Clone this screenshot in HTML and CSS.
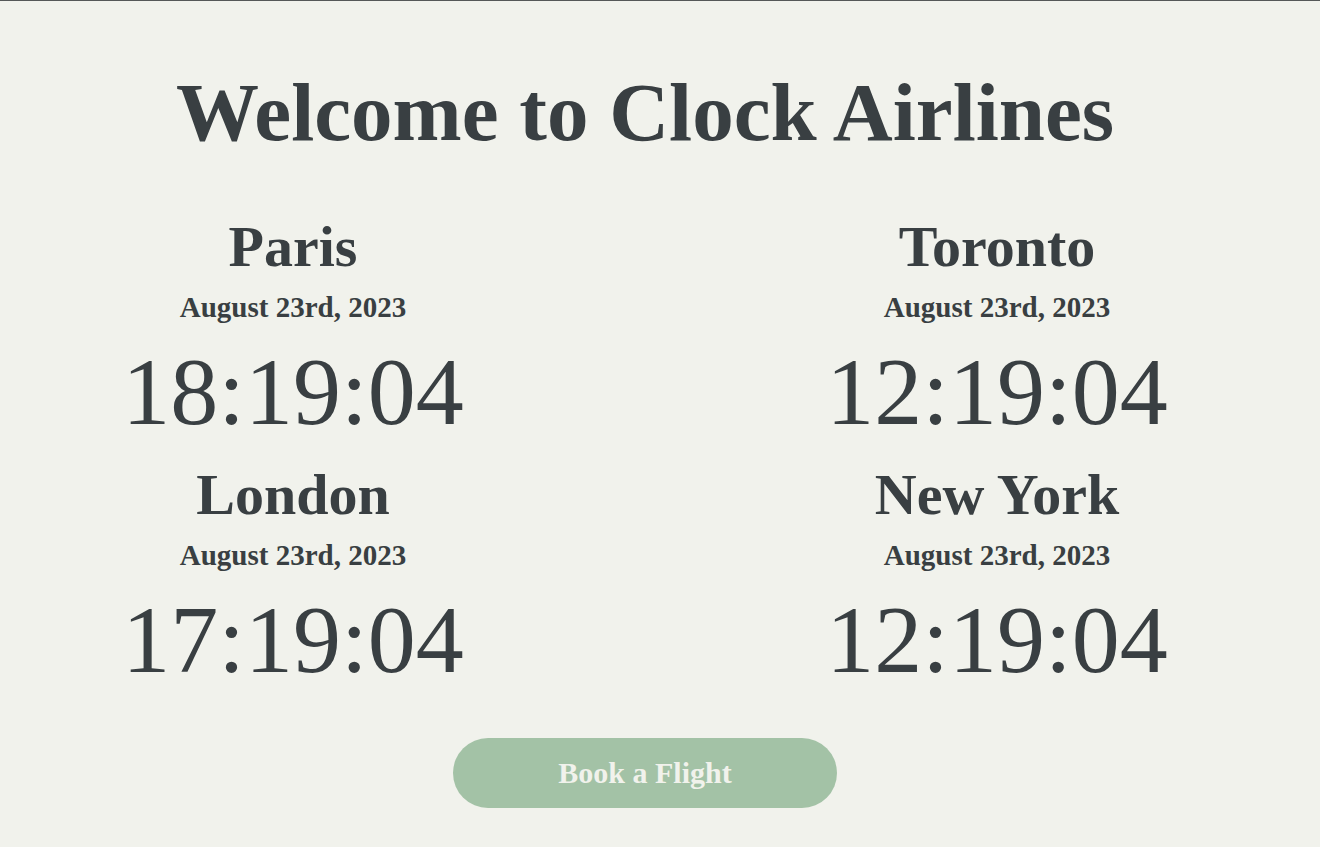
FILE: index.html
```html
<!DOCTYPE html>
<html lang="en">
<head>
<meta charset="utf-8">
<title>Clock Airlines</title>
<link rel="stylesheet" href="styles.css">
</head>
<body>
<main class="page">
  <h1 class="title">Welcome to Clock Airlines</h1>
  <section class="clocks">
    <div class="clock">
      <h2 class="city">Paris</h2>
      <p class="date">August 23rd, 2023</p>
      <p class="time">18:19:04</p>
    </div>
    <div class="clock">
      <h2 class="city">Toronto</h2>
      <p class="date">August 23rd, 2023</p>
      <p class="time">12:19:04</p>
    </div>
    <div class="clock">
      <h2 class="city">London</h2>
      <p class="date">August 23rd, 2023</p>
      <p class="time">17:19:04</p>
    </div>
    <div class="clock">
      <h2 class="city">New York</h2>
      <p class="date">August 23rd, 2023</p>
      <p class="time">12:19:04</p>
    </div>
  </section>
  <div class="actions">
    <button class="book">Book a Flight</button>
  </div>
</main>
</body>
</html>
```

FILE: styles.css
```css
html, body {
  margin: 0;
  padding: 0;
}
body {
  background: #f1f2ec;
  border-top: 1px solid #555858;
  color: #393f42;
  font-family: "Liberation Serif", "Times New Roman", serif;
  height: 846px;
  overflow: hidden;
}
.page {
  width: 1290px;
}
.title {
  margin: 61px 0 0;
  font-size: 83px;
  line-height: 100px;
  font-weight: 700;
  text-align: center;
}
.clocks {
  margin-top: 53px;
  padding: 0 123px;
  display: grid;
  grid-template-columns: 340px 340px;
  justify-content: space-between;
  row-gap: 19px;
}
.clock {
  display: flex;
  flex-direction: column;
  align-items: center;
  text-align: center;
}
.city {
  margin: 0;
  font-size: 58px;
  line-height: 64px;
  font-weight: 700;
}
.date {
  margin: 10px 0 0;
  font-size: 29px;
  line-height: 36px;
  font-weight: 700;
}
.time {
  margin: 15px 0 0;
  font-size: 96px;
  line-height: 104px;
  font-weight: 400;
  white-space: nowrap;
}
.actions {
  display: flex;
  justify-content: center;
  margin-top: 46px;
}
.book {
  width: 384px;
  height: 70px;
  border: none;
  border-radius: 35px;
  background: #a3c2a6;
  color: #f1f2ec;
  font-family: "Liberation Serif", "Times New Roman", serif;
  font-size: 30px;
  line-height: 70px;
  font-weight: 700;
  padding: 0;
}
```
